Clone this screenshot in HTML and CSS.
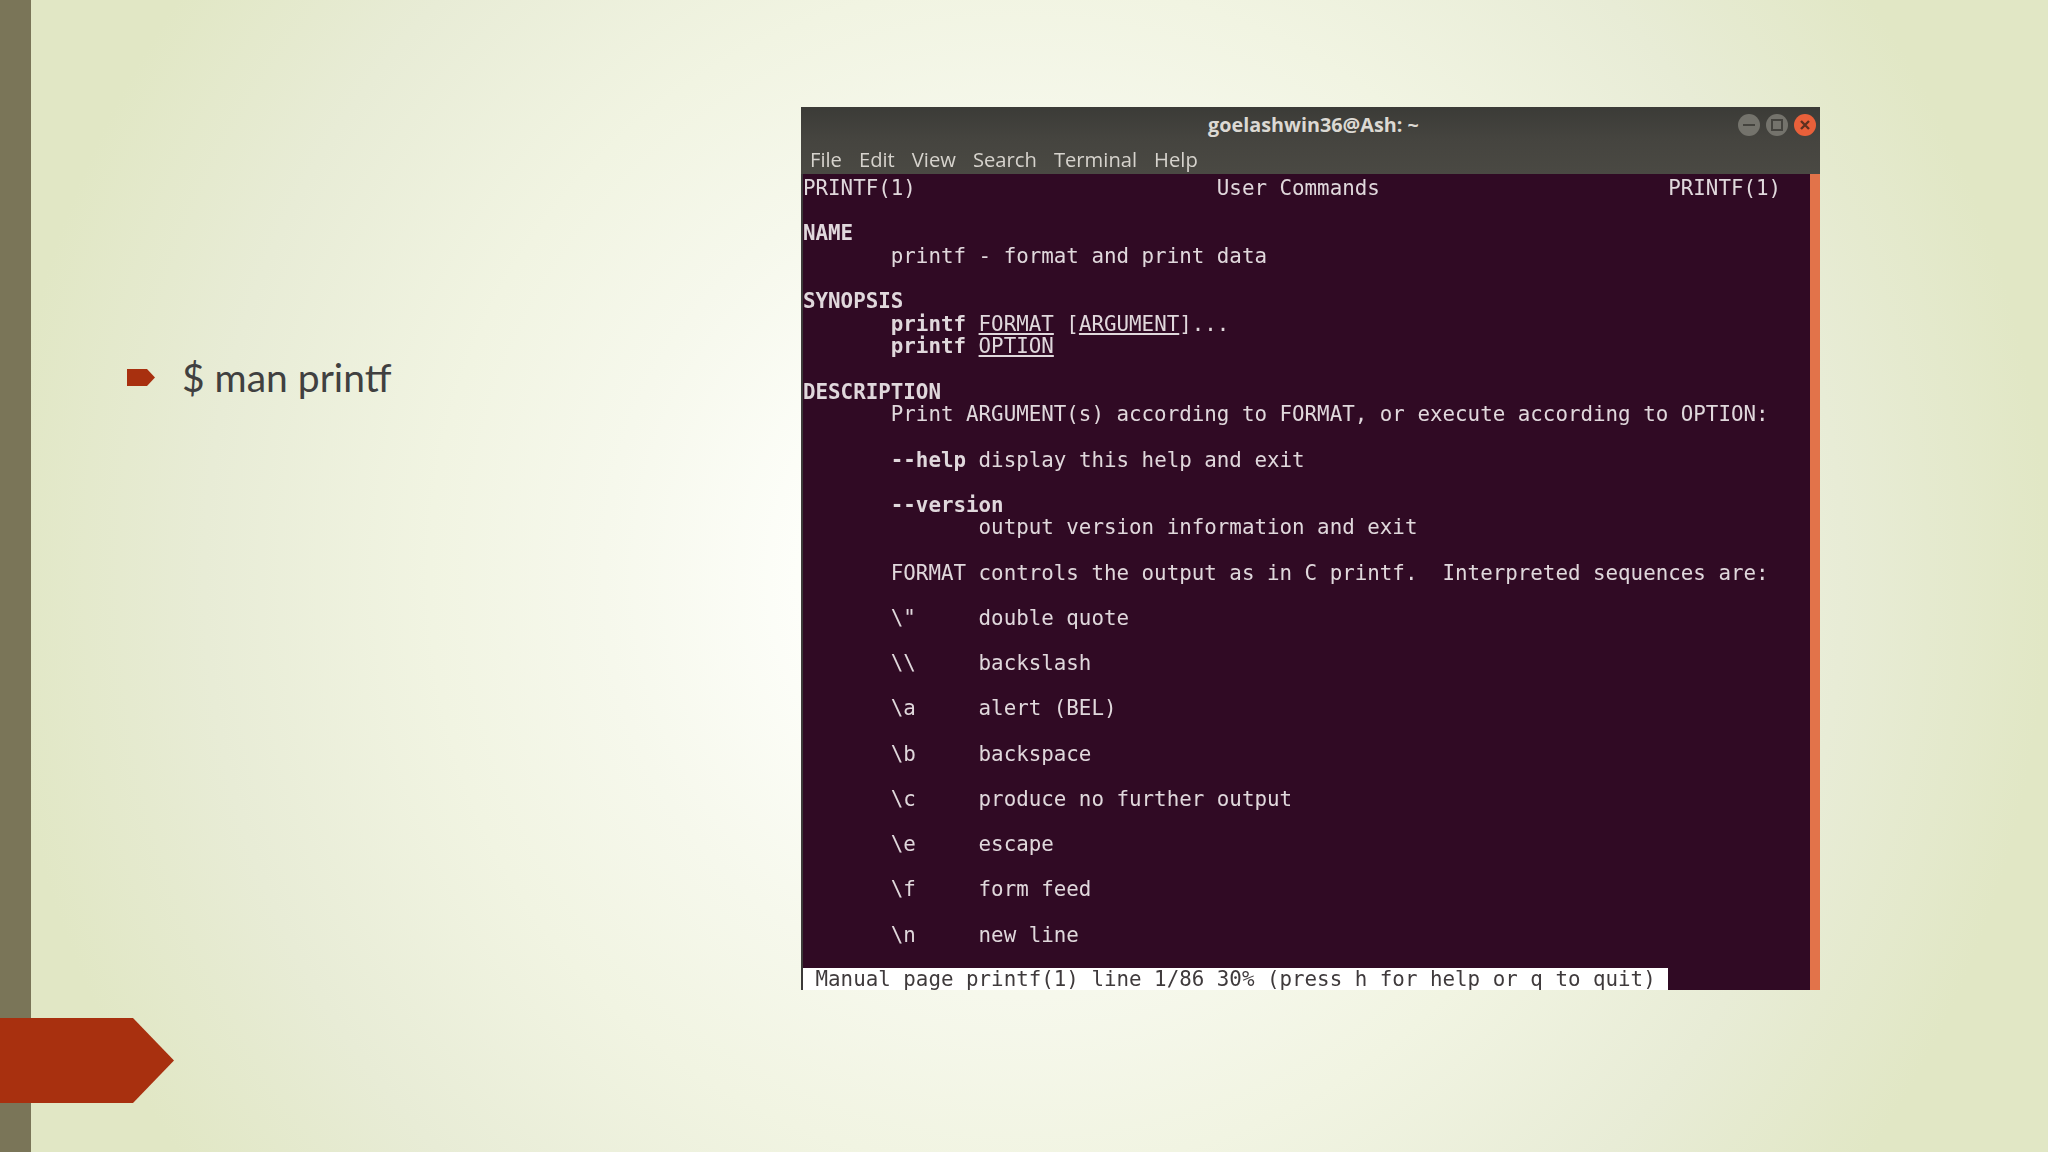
FILE: index.html
```html
<!DOCTYPE html>
<html lang="en">
<head>
<meta charset="utf-8">
<title>man printf</title>
<link rel="stylesheet" href="styles.css">
</head>
<body>
<main class="slide">
  <div class="strip"></div>
  <section class="bullets">
    <div class="bullet">
      <svg class="marker" width="28" height="17" viewBox="0 0 28 17"><polygon points="0,0 20,0 28,8.5 20,17 0,17"/></svg>
      <span class="bullet-text">$ man printf</span>
    </div>
  </section>
  <section class="window">
    <header class="titlebar">
      <div class="title">goelashwin36@Ash: ~</div>
      <div class="controls">
        <svg class="ctl" width="24" height="24" viewBox="0 0 24 24"><circle class="ctl-grey" cx="12" cy="12" r="11"/><path class="ctl-mark" d="M6 12H18"/></svg>
        <svg class="ctl" width="24" height="24" viewBox="0 0 24 24"><circle class="ctl-grey" cx="12" cy="12" r="11"/><rect class="ctl-mark" x="7" y="7" width="10" height="10"/></svg>
        <svg class="ctl" width="24" height="24" viewBox="0 0 24 24"><circle class="ctl-red" cx="12" cy="12" r="11"/><path class="ctl-x" d="M8 8L16 16M16 8L8 16"/></svg>
      </div>
    </header>
    <nav class="menubar">
      <span>File</span><span>Edit</span><span>View</span><span>Search</span><span>Terminal</span><span>Help</span>
    </nav>
    <div class="term">
<pre class="screen">PRINTF(1)                        User Commands                       PRINTF(1)

<b>NAME</b>
       printf - format and print data

<b>SYNOPSIS</b>
       <b>printf</b> <u>FORMAT</u> [<u>ARGUMENT</u>]...
       <b>printf</b> <u>OPTION</u>

<b>DESCRIPTION</b>
       Print ARGUMENT(s) according to FORMAT, or execute according to OPTION:

       <b>--help</b> display this help and exit

       <b>--version</b>
              output version information and exit

       FORMAT controls the output as in C printf.  Interpreted sequences are:

       \"     double quote

       \\     backslash

       \a     alert (BEL)

       \b     backspace

       \c     produce no further output

       \e     escape

       \f     form feed

       \n     new line

<span class="status"> Manual page printf(1) line 1/86 30% (press h for help or q to quit) </span></pre>
      <div class="scrollbar"></div>
    </div>
  </section>
  <svg class="tag" width="174" height="85" viewBox="0 0 174 85"><polygon points="0,0 133,0 174,42.5 133,85 0,85"/></svg>
</main>
</body>
</html>
```
FILE: styles.css
```css
* { box-sizing: border-box; }
html, body { margin: 0; padding: 0; }
body { width: 2048px; height: 1152px; overflow: hidden; }
.slide {
  position: relative;
  display: flex;
  width: 2048px;
  height: 1152px;
  overflow: hidden;
  background: radial-gradient(circle 1024px at 1024px 576px, #ffffff 0, #fdfef9 22%, #f6f8ec 41%, #f1f4e2 58%, #e8ecd6 80%, #e1e7c5 100%);
}
.strip { flex: 0 0 31px; background: #7a7558; }
.bullets { flex: 0 0 770px; padding: 352px 0 0 96px; }
.bullet {
  display: flex;
  align-items: center;
  gap: 27px;
  font-family: "Lato", sans-serif;
  font-size: 39px;
  line-height: 50px;
  color: #404040;
}
.bullet-text { padding-bottom: 1px; }
.marker { fill: #a8300f; flex: none; }
.window {
  flex: 0 0 1019px;
  display: flex;
  flex-direction: column;
  height: 883px;
  margin-top: 107px;
  background: #45443f;
  filter: blur(0.5px);
}
.titlebar {
  position: relative;
  flex: 0 0 31px;
  background: linear-gradient(#3b3b37, #45443f);
}
.title {
  padding: 6px 0 0 6px;
  text-align: center;
  font-family: "Open Sans", sans-serif;
  font-weight: 700;
  font-size: 19.8px;
  line-height: 24px;
  color: #dcd9d3;
}
.controls {
  position: absolute;
  top: 6px;
  right: 3px;
  display: flex;
  gap: 4px;
}
.ctl-grey { fill: #74736c; }
.ctl-red { fill: #e9603a; }
.ctl-mark { fill: none; stroke: #44433e; stroke-width: 2; }
.ctl-x { fill: none; stroke: #5d3020; stroke-width: 2.4; }
.menubar {
  flex: 0 0 36px;
  display: flex;
  align-items: center;
  gap: 17px;
  padding: 5px 0 0 9px;
  font-family: "Open Sans", sans-serif;
  font-size: 20.2px;
  color: #d6d3cd;
  background: linear-gradient(#45443f, #4a4943);
}
.term {
  flex: 1;
  min-height: 0;
  display: flex;
  justify-content: space-between;
  background: #300a24;
  border-left: 2px solid #3c3a3a;
}
.screen {
  margin: 0;
  padding-top: 3px;
  font-family: "DejaVu Sans Mono", monospace;
  font-size: 20.83px;
  line-height: 22.63px;
  color: #e0d8dc;
}
.screen u { text-underline-offset: 2px; }
.status {
  display: block;
  width: fit-content;
  height: 22px;
  margin-top: -1px;
  line-height: 22px;
  background: #ffffff;
  color: #3f3a3c;
}
.scrollbar { flex: 0 0 10px; background: #e2734a; }
.tag { position: absolute; left: 0; top: 1018px; fill: #a8300f; }
```
